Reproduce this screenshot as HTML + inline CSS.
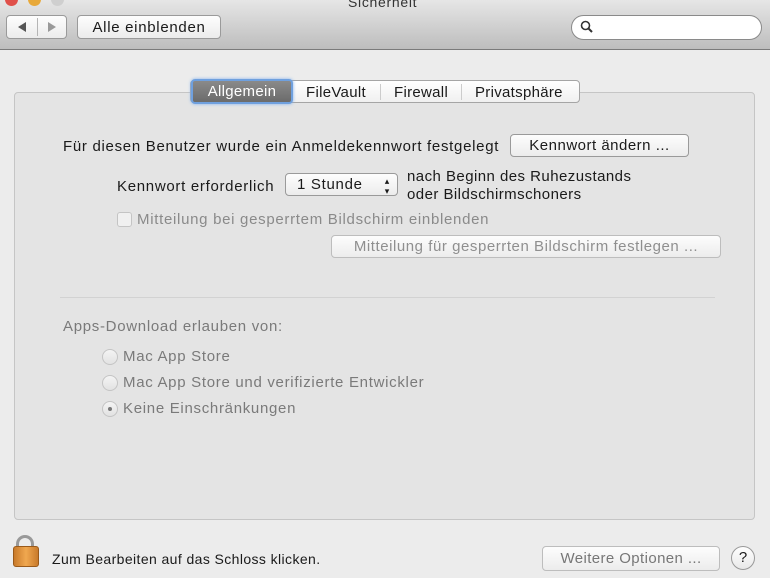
<!DOCTYPE html>
<html><head><meta charset="utf-8"><style>
*{box-sizing:border-box;margin:0;padding:0}
body{width:770px;height:578px;overflow:hidden;background:#ececec;font-family:"Liberation Sans",sans-serif;font-size:14px;color:#1a1a1a;position:relative;letter-spacing:0.7px}
.a{position:absolute;white-space:nowrap}
.tb{position:absolute;left:0;top:0;width:770px;height:50px;background:linear-gradient(#e6e6e6,#bdbdbd);border-bottom:1px solid #7a7a7a}
.btn{position:absolute;border:1px solid #9a9a9a;border-radius:4px;background:linear-gradient(#fdfdfd,#ececec);text-align:center;font-size:14px}
.dis{color:#8f8f8f;border-color:#bdbdbd}
.panel{position:absolute;left:14px;top:92px;width:741px;height:428px;background:#e4e4e4;border:1px solid #c5c5c5;border-radius:4px}
.g{color:#8a8a8a}
.rad{position:absolute;width:16px;height:16px;border-radius:50%;border:1px solid #c4c4c4;background:linear-gradient(#f4f4f4,#e2e2e2)}
</style></head><body>
<div class="tb"></div>
<div class="a" style="left:5px;top:-7px;width:13px;height:13px;border-radius:50%;background:#e0504a"></div>
<div class="a" style="left:28px;top:-7px;width:13px;height:13px;border-radius:50%;background:#e8a93a"></div>
<div class="a" style="left:51px;top:-7px;width:13px;height:13px;border-radius:50%;background:#cfcfcf"></div>
<div class="a" style="left:348px;top:-6px;font-size:14px;color:#333">Sicherheit</div>
<div class="btn" style="left:6px;top:15px;width:61px;height:24px"></div>
<div class="a" style="left:37px;top:18px;width:1px;height:18px;background:#b5b5b5"></div>
<svg class="a" style="left:16px;top:21px" width="12" height="12"><path d="M10 1L2 6L10 11Z" fill="#555"/></svg>
<svg class="a" style="left:45px;top:21px" width="12" height="12"><path d="M3 1L11 6L3 11Z" fill="#999"/></svg>
<div class="btn" style="left:77px;top:15px;width:144px;height:24px;line-height:23px;font-size:15px">Alle einblenden</div>
<div class="a" style="left:571px;top:15px;width:191px;height:25px;border-radius:13px;background:#fff;border:1px solid #8a8a8a"></div>
<svg class="a" style="left:580px;top:20px" width="14" height="14"><circle cx="5.5" cy="5.5" r="4" fill="none" stroke="#333" stroke-width="1.6"/><path d="M8.5 8.5L12 12" stroke="#333" stroke-width="2"/></svg>

<div class="panel"></div>
<div class="a" style="left:190px;top:80px;width:390px;height:23px;border:1px solid #a5a5a5;border-radius:4px;background:linear-gradient(#fff,#f0f0f0)"></div>
<div class="a" style="left:191px;top:79px;width:102px;height:25px;border-radius:4px;background:linear-gradient(#8a8a8a,#6b6b6b);border:2px solid #6fa0de;box-shadow:0 0 3px #7fb0ee;color:#fff;text-align:center;line-height:22px;font-size:15px;letter-spacing:0.3px">Allgemein</div>
<div class="a" style="left:306px;top:84px;font-size:15px;letter-spacing:0.3px">FileVault</div>
<div class="a" style="left:380px;top:84px;width:1px;height:16px;background:#ccc"></div>
<div class="a" style="left:394px;top:84px;font-size:15px;letter-spacing:0.3px">Firewall</div>
<div class="a" style="left:461px;top:84px;width:1px;height:16px;background:#ccc"></div>
<div class="a" style="left:475px;top:84px;font-size:15px;letter-spacing:0.3px">Privatsphäre</div>

<div class="a" style="left:63px;top:138px;font-size:15px;letter-spacing:0.7px">Für diesen Benutzer wurde ein Anmeldekennwort festgelegt</div>
<div class="btn" style="left:510px;top:134px;width:179px;height:23px;line-height:22px;font-size:15px;letter-spacing:0.5px">Kennwort ändern ...</div>
<div class="a" style="left:117px;top:178px;font-size:15px">Kennwort erforderlich</div>
<div class="btn" style="left:285px;top:173px;width:113px;height:23px;line-height:22px;text-align:left;padding-left:11px;font-size:15px">1 Stunde<span style="position:absolute;right:7px;font-size:9px;line-height:10px;top:2px">▴<br>▾</span></div>
<div class="a" style="left:407px;top:168px;font-size:15px;line-height:18px;letter-spacing:0.45px">nach Beginn des Ruhezustands<br>oder Bildschirmschoners</div>
<div class="a" style="left:117px;top:212px;width:15px;height:15px;border:1px solid #c4c4c4;border-radius:3px;background:#f0f0f0"></div>
<div class="a g" style="left:137px;top:211px;font-size:15px">Mitteilung bei gesperrtem Bildschirm einblenden</div>
<div class="btn dis" style="left:331px;top:235px;width:390px;height:23px;line-height:22px;font-size:15px;letter-spacing:0.55px">Mitteilung für gesperrten Bildschirm festlegen ...</div>
<div class="a" style="left:60px;top:297px;width:655px;height:1px;background:#d2d2d2"></div>
<div class="a g" style="left:63px;top:318px;font-size:15px;color:#7a7a7a">Apps-Download erlauben von:</div>
<div class="rad" style="left:102px;top:349px"></div>
<div class="a g" style="left:123px;top:348px;font-size:15px;color:#7a7a7a">Mac App Store</div>
<div class="rad" style="left:102px;top:375px"></div>
<div class="a g" style="left:123px;top:374px;font-size:15px;color:#7a7a7a">Mac App Store und verifizierte Entwickler</div>
<div class="rad" style="left:102px;top:401px"></div>
<div class="a" style="left:108px;top:407px;width:4px;height:4px;border-radius:50%;background:#777"></div>
<div class="a g" style="left:123px;top:400px;font-size:15px;color:#7a7a7a">Keine Einschränkungen</div>

<div class="a" style="left:16px;top:535px;width:18px;height:16px;border:3px solid #999;border-bottom:none;border-radius:9px 9px 0 0"></div>
<div class="a" style="left:13px;top:546px;width:26px;height:21px;border-radius:3px;background:linear-gradient(90deg,#c97a2a,#f0a850,#c97a2a);border:1px solid #9a5a1a"></div>
<div class="a" style="left:52px;top:551px;font-size:14px;letter-spacing:0.4px">Zum Bearbeiten auf das Schloss klicken.</div>
<div class="btn dis" style="left:542px;top:546px;width:178px;height:25px;line-height:24px;font-size:15px;color:#777;letter-spacing:0.4px">Weitere Optionen ...</div>
<div class="a" style="left:731px;top:546px;width:24px;height:24px;border-radius:50%;border:1px solid #999;background:linear-gradient(#fff,#e8e8e8);text-align:center;line-height:22px;font-size:15px;letter-spacing:0">?</div>
</body></html>
